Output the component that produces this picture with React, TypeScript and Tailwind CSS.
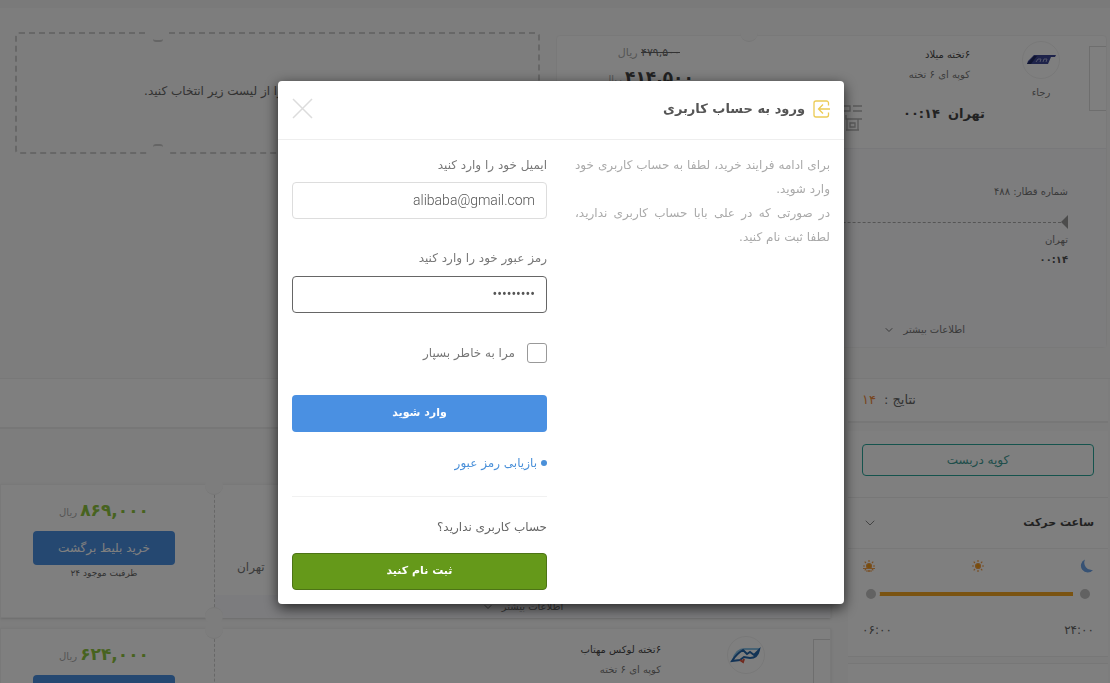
import { useState, type ReactNode } from 'react'
import { ChevronDown } from 'lucide-react'

function Notch({ className }: { className: string }) {
  return <span className={`absolute size-[18px] rounded-full bg-[#fafafa] ${className}`} />
}

function DashGap({ className }: { className: string }) {
  return (
    <span className={`absolute flex h-[10px] w-[18px] justify-center bg-[#fafafa] ${className}`}>
      <span className="h-[6px] w-[10px] rounded-full border-[#cbcbcb]" />
    </span>
  )
}

function LoginIcon() {
  return (
    <svg width="17" height="18" viewBox="0 0 17 18" fill="none" stroke="#eccb55" strokeWidth="1.3">
      <path d="M15.500 5.500V3a2 2 0 0 0-2-2H3a2 2 0 0 0-2 2v12a2 2 0 0 0 2 2h10.500a2 2 0 0 0 2-2v-2.500" />
      <path d="M17 9H6M10 4.500 5.500 9l4.500 4.500" />
    </svg>
  )
}

function CloseIcon() {
  return (
    <svg width="21" height="21" viewBox="0 0 21 21" fill="none" stroke="#dcdcdc" strokeWidth="1.500">
      <path d="M1 1l19 19M20 1 1 20" />
    </svg>
  )
}

function RajaLogo() {
  return (
    <svg width="30" height="12" viewBox="0 0 30 12">
      <path d="M8 1h22l-1 2h-4l-3 7H1l1-3z" fill="#3c4795" />
      <path d="M1 10 8 2h3l-6 8z" fill="#1e2860" />
      <path d="m10 8 2-3h3l-1 3m3 0 1-3h3l-1 3" fill="none" stroke="#a4a9d0" strokeWidth="1" />
    </svg>
  )
}

function FadakLogo() {
  return (
    <svg width="32" height="18" viewBox="0 0 32 18" fill="none">
      <path d="M3 14C5 7 9 3 15 3h15" stroke="#8cc4e8" strokeWidth="2" />
      <path d="M2 15c3-5 6-8 11-11l4 4 3-2 4 3 5-5c-1 5-4 8-9 8l-6-1-4 3z" stroke="#2467ad" strokeWidth="2" />
      <path d="m10 14 3 2 1-3" stroke="#e2543e" strokeWidth="2" />
    </svg>
  )
}

function TrainIcon() {
  return (
    <svg width="30" height="26" viewBox="0 0 30 26" fill="none" stroke="#b4b4b4" strokeWidth="1.300">
      <path d="M2 1h15v5H2zM20 1h9M20 6h9M2 10h8v4H2zM13 10v4h16M14 14v11h11V14M17 18h5v4h-5zM13 25h13" />
    </svg>
  )
}

function Sun({ rising }: { rising?: boolean }) {
  return (
    <svg width="14" height="14" viewBox="0 0 14 14" fill="none" stroke="#f3a04a" strokeWidth="1.200">
      <circle cx="7" cy="7" r="2.500" fill="#f39c12" />
      <path d="M7 1v2M7 11v2M1 7h2M11 7h2M2.700 2.700l1.300 1.300M10 10l1.300 1.300M2.700 11.300 4 10M10 4l1.300-1.300" />
      {rising && <path d="M1 9.500h12M4 12h6" />}
    </svg>
  )
}

function Moon() {
  return (
    <svg width="15" height="14" viewBox="0 0 15 14" fill="#6fa5e8">
      <path d="M6 .5A6.800 6.800 0 1 0 14 11 7.500 7.500 0 0 1 6 .5z" />
    </svg>
  )
}

function Stub() {
  return <div className="mt-[10px] h-[65px] w-[17px] shrink-0 border border-r-0 border-[#dcdcdc]" />
}

function LogoCircle({ children }: { children: ReactNode }) {
  return <div className="flex size-[38px] items-center justify-center rounded-full border border-[#f1f1f1]">{children}</div>
}

function SelectedTicket() {
  return (
    <section className="mt-[3px] rounded-sm border border-[#f3f3f3] bg-white">
      <div className="relative flex h-[112px]">
        <Stub />
        <div className="mr-[18px] flex w-[60px] flex-col items-center pt-[5px]">
          <LogoCircle><RajaLogo /></LogoCircle>
          <span className="mt-[4px] text-[10px] leading-5 text-[#777]">رجاء</span>
        </div>
        <div className="mr-[26px] w-[96px] whitespace-nowrap pt-[9px] text-[10px] text-[#777]">
          <p className="pr-[15px] leading-5 text-[#444]">۶تخته میلاد</p>
          <p className="pr-[15px] leading-5">کوپه ای ۶ تخته</p>
          <p className="mt-[17px] flex gap-2 text-[13px] font-bold leading-6 text-[#444]">
            <span>تهران</span>
            <span>۰۰:۱۴</span>
          </p>
        </div>
        <div className="mr-[26px] pt-[69px]"><TrainIcon /></div>
        <div className="mr-auto flex w-[184px] flex-col items-center pt-[7px]">
          <p className="text-[11px] leading-5 text-[#aaa]"><del className="text-[#666]">۴۷۹,۵۰۰</del> ریال</p>
          <p className="text-[10px] leading-7 text-[#aaa]"><b className="text-[17px] text-[#444]">۴۱۴,۵۰۰</b> ریال</p>
        </div>
        <Notch className="-top-[12px] left-[183px] border-b border-[#ececec]" />
      </div>
      <div className="flex h-[199px] flex-col border-t border-[#f0f0f4] bg-[#fafafd] pr-[38px] pt-[33px] text-[10px] text-[#777]">
        <p className="leading-5">شماره قطار: ۴۸۸</p>
        <div className="mt-[12px] flex h-[16px] items-center">
          <span className="h-0 w-0 border-y-[7px] border-l-0 border-r-[7px] border-y-transparent border-r-[#999]" />
          <span className="flex-1 border-t border-dashed border-[#aaa]" />
        </div>
        <p className="leading-5">تهران</p>
        <p className="text-[10px] font-bold leading-5 text-[#555]">۰۰:۱۴</p>
        <button className="mr-[103px] mt-[50px] flex items-center gap-2 leading-5">
          اطلاعات بیشتر <ChevronDown size={12} />
        </button>
      </div>
    </section>
  )
}

function ReturnPlaceholder() {
  return (
    <section className="relative flex h-[122px] items-center justify-center rounded border-2 border-dashed border-[#cfcfcf]">
      <p className="whitespace-nowrap pl-2 pb-1 text-[12px] text-[#666]">لطفا یک بلیط برگشت خود را از لیست زیر انتخاب کنید.</p>
      <DashGap className="-top-[2px] left-[132px] items-end [&>span]:border-b-2" />
      <DashGap className="-bottom-[2px] left-[132px] items-start [&>span]:border-t-2" />
    </section>
  )
}

interface ResultProps {
  price: string
  capacity?: string
  children: ReactNode
}

function ResultCard({ price, capacity, children }: ResultProps) {
  return (
    <article className="relative flex h-[134px] border border-[#f3f3f3] bg-white shadow-sm">
      <div className="min-w-0 flex-1">{children}</div>
      <div className="flex w-[214px] flex-col items-center border-r border-dashed border-[#cfcfcf] pr-[7px] pt-[9px]">
        <p className="text-[10px] leading-8 text-[#aaa]"><b className="text-[17px] text-[#8fc63f]">{price}</b> ریال</p>
        <button className="mt-[2px] h-[34px] w-[142px] shrink-0 rounded bg-[#4a90e2] text-[12px] leading-4 text-white">خرید بلیط برگشت</button>
        {capacity && <p className="text-[9px] leading-4 text-[#666]">ظرفیت موجود {capacity}</p>}
      </div>
      <Notch className="-top-[8px] left-[204px] border-b border-[#ececec]" />
      <Notch className="-bottom-[8px] left-[204px] border-t border-[#ececec]" />
    </article>
  )
}

function Sidebar() {
  const [from, setFrom] = useState(6)
  const [to, setTo] = useState(24)
  const thumb =
    'pointer-events-none absolute inset-0 m-0 w-full appearance-none bg-transparent [&::-webkit-slider-thumb]:pointer-events-auto [&::-webkit-slider-thumb]:size-[18px] [&::-webkit-slider-thumb]:appearance-none [&::-webkit-slider-thumb]:rounded-full [&::-webkit-slider-thumb]:border-4 [&::-webkit-slider-thumb]:border-solid [&::-webkit-slider-thumb]:border-white [&::-webkit-slider-thumb]:bg-[#c4c4c4]'

  return (
    <aside className="flex w-[260px] shrink-0 flex-col">
      <p className="flex h-[44px] items-center justify-end gap-2 border-b-2 border-[#efefef] bg-white pl-[14px] text-[13px] text-[#666]">
        <span>نتایج :</span>
        <span className="text-[#f08b3c]">۱۴</span>
      </p>
      <div className="mt-[8px] h-[66px] bg-white px-[14px] pt-[13px]">
        <button className="h-[32px] w-full rounded border border-[#2aa79b] text-[12px] text-[#3f9c96]">کوپه دربست</button>
      </div>
      <section className="h-[160px] border-y border-[#efefef] bg-white">
        <h3 className="flex h-[51px] items-center justify-between border-b border-[#f1f1f1] px-[14px] text-[11px] font-bold text-[#444]">
          ساعت حرکت <ChevronDown size={16} strokeWidth={1.5} className="text-[#888]" />
        </h3>
        <div className="px-[14px] pt-[10px]">
          <div className="flex items-center justify-between"><Moon /><Sun /><Sun rising /></div>
          <div className="relative mt-[12px] h-[18px]" dir="ltr">
            <div className="absolute left-[17px] right-[21px] top-[7px] h-1 bg-[#f5a623]" />
            <input aria-label="از ساعت" type="range" min={6} max={24} value={from} onChange={e => setFrom(+e.target.value)} className={thumb} />
            <input aria-label="تا ساعت" type="range" min={6} max={24} value={to} onChange={e => setTo(+e.target.value)} className={thumb} />
          </div>
          <p className="mt-[15px] flex justify-between text-[12px] leading-6 text-[#666]">
            <span>۲۴:۰۰</span>
            <span>۰۶:۰۰</span>
          </p>
        </div>
      </section>
      <section className="mt-[6px] h-[60px] border-t border-[#efefef] bg-white" />
    </aside>
  )
}

function LoginModal() {
  return (
    <div className="fixed inset-0 flex items-center justify-center bg-black/50 pl-3 pt-[1px]">
      <div role="dialog" aria-labelledby="login-title" className="w-full max-w-[566px] rounded bg-white shadow-[0_4px_14px_rgba(0,0,0,0.7)]">
        <header className="flex h-[59px] items-center justify-between border-b border-[#eee] px-[14px] pb-[2px]">
          <h2 id="login-title" className="flex items-center gap-2 text-[13px] font-bold text-[#555]">
            <LoginIcon /> ورود به حساب کاربری
          </h2>
          <button aria-label="بستن"><CloseIcon /></button>
        </header>

        <div className="grid grid-cols-2 gap-7 px-[14px] pb-[14px] pt-[13px]">
          <div className="text-justify text-[12px] leading-6 text-[#aaa]">
            <p>برای ادامه فرایند خرید، لطفا به حساب کاربری خود وارد شوید.</p>
            <p>در صورتی که در علی بابا حساب کاربری ندارید، لطفا ثبت نام کنید.</p>
          </div>

          <form className="text-[12px] text-[#777]" onSubmit={e => e.preventDefault()}>
            <label htmlFor="email" className="block leading-6">ایمیل خود را وارد کنید</label>
            <input
              id="email" type="email" defaultValue="alibaba@gmail.com"
              className="mt-[5px] h-[37px] w-full rounded-sm border border-[#ddd] px-[11px] font-[Roboto,sans-serif] text-[14px] font-light text-[#555] outline-none"
            />
            <label htmlFor="password" className="mt-[27px] block leading-6">رمز عبور خود را وارد کنید</label>
            <input
              id="password" type="password" defaultValue="123456789"
              className="mt-[6px] h-[37px] w-full rounded-sm border border-[#666] px-[11px] font-[Roboto,sans-serif] text-[14px] text-[#555] outline-none"
            />
            <label className="mt-[28px] flex items-center gap-3 leading-6">
              <input type="checkbox" className="size-5 appearance-none rounded-[3px] border border-[#999] bg-white" />
              مرا به خاطر بسپار
            </label>
            <button type="submit" className="mt-[30px] h-[37px] w-full rounded bg-[#4a90e2] text-[11px] font-bold text-white">وارد شوید</button>
            <a href="#reset" className="mt-[19px] flex items-center gap-1 leading-6 text-[#4a90d9]">
              <span className="size-[6px] rounded-full bg-[#4a90d9]" />
              بازیابی رمز عبور
            </a>
            <hr className="mt-[21px] border-[#f1f1f1]" />
            <p className="mt-[18px] leading-6 text-[#666]">حساب کاربری ندارید؟</p>
            <button type="button" className="mt-[14px] h-[37px] w-full rounded border border-[#4d7416] bg-[#65991a] text-[11px] font-bold text-white">ثبت نام کنید</button>
          </form>
        </div>
      </div>
    </div>
  )
}

export default function App() {
  return (
    <div dir="rtl" className="h-screen overflow-hidden bg-[#fafafa] font-['DejaVu_Sans',sans-serif]">
      <div className="grid h-[378px] grid-cols-[21fr_20fr] items-start gap-4 border-t-8 border-[#f5f5f5] pl-[15px] pr-[3px] pt-[24px]">
        <SelectedTicket />
        <ReturnPlaceholder />
      </div>

      <div className="flex gap-[17px] border-t border-[#f1f1f1] pr-[2px]">
        <Sidebar />
        <main className="min-w-0 flex-1">
          <div className="h-[50px] border-b-2 border-[#efefef] bg-white" />
          <div className="mt-[55px] space-y-[10px]">
            <ResultCard price="۸۶۹,۰۰۰" capacity="۲۴">
              <div className="flex h-[110px] items-end justify-end gap-3 pb-[19px] pl-[22px] text-[12px] text-[#777]">
                <b className="text-[13px] text-[#444]">۰۶:۱۱</b>
                <span>تهران</span>
              </div>
              <div className="flex h-[23px] items-center justify-center gap-2 bg-[#f8f8fc] text-[10px] text-[#777]">
                اطلاعات بیشتر <ChevronDown size={12} />
              </div>
            </ResultCard>
            <ResultCard price="۶۲۴,۰۰۰">
              <div className="flex">
                <Stub />
                <div className="mr-[48px] pt-[7px]"><LogoCircle><FadakLogo /></LogoCircle></div>
                <div className="mr-[66px] pt-[11px] text-[10px] leading-5 text-[#777]">
                  <p className="text-[#444]">۶تخته لوکس مهتاب</p>
                  <p>کوپه ای ۶ تخته</p>
                </div>
              </div>
            </ResultCard>
          </div>
        </main>
      </div>

      <LoginModal />
    </div>
  )
}
